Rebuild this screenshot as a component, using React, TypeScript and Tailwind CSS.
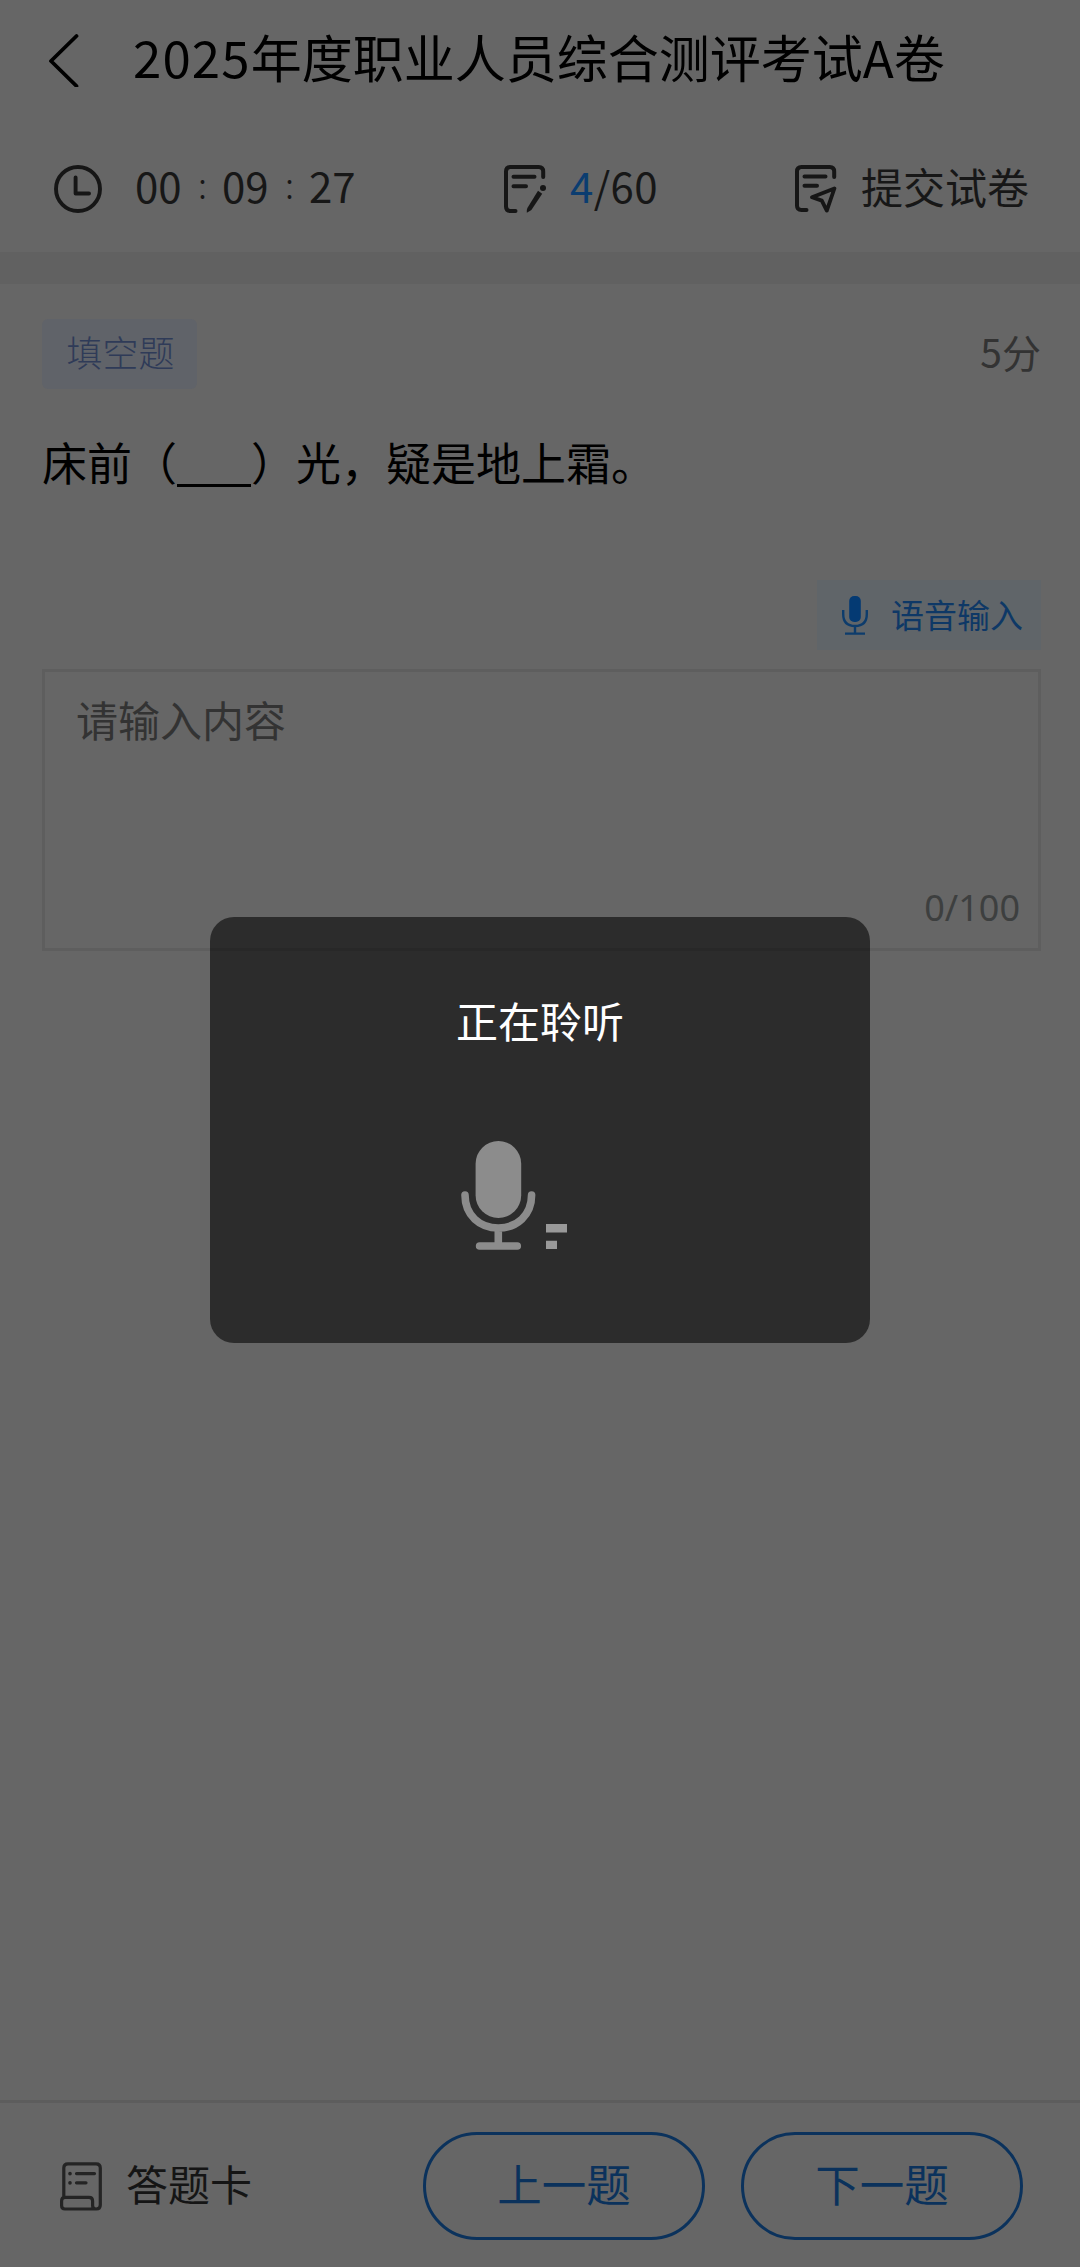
import type { ReactNode } from "react";

function ClockIcon() {
  return (
    <svg width="48" height="48" viewBox="0 0 48 48" fill="none" stroke="#161616" strokeWidth="3.9" strokeLinecap="round" strokeLinejoin="round">
      <circle cx="24" cy="24" r="22" />
      <path d="M21.6 12.5V28.5H35" />
    </svg>
  );
}

function EditSheetIcon() {
  return (
    <svg width="42" height="48" viewBox="0 0 42 48" fill="none" stroke="#161616" strokeWidth="4" strokeLinecap="round" strokeLinejoin="round">
      <path d="M39.2 12V6.5Q39.2 2 34.7 2H6.5Q2 2 2 6.5V41.5Q2 46 6.5 46H11.5" />
      <path d="M9.5 11.8H30.5M9.5 21.2H22" />
      <path d="M34 25.8L38.2 28.8L27.4 45L22.8 47.8Q22.3 45.4 23.4 43Z" fill="#161616" stroke="none" />
      <circle cx="39" cy="23" r="3" fill="#161616" stroke="none" />
    </svg>
  );
}

function SubmitSheetIcon() {
  return (
    <svg width="42" height="48" viewBox="0 0 42 48" fill="none" stroke="#161616" strokeWidth="4" strokeLinecap="round" strokeLinejoin="round">
      <path d="M39.2 12V6.5Q39.2 2 34.7 2H6.5Q2 2 2 6.5V40.5Q2 45 6.5 45H11.5" />
      <path d="M9.5 11.4H30.5M9.5 20.8H22" />
      <path d="M39.4 23.5L17 32.2L26.8 35.6L31.8 45.6Z" strokeWidth="3.8" />
    </svg>
  );
}

function AnswerCardIcon() {
  return (
    <svg width="42" height="49" viewBox="0 0 42 49" fill="none" stroke="#242424" strokeWidth="3.2" strokeLinecap="round" strokeLinejoin="round">
      <path d="M3.8 35V6Q3.8 1.8 8 1.8H36Q40.3 1.8 40.3 6V43Q40.3 47 36.3 47H5Q1.6 47 1.6 43.5V39Q1.6 35.4 5 35.4H29Q32.6 35.4 32.6 39V43.5Q32.6 47 36 47" />
      <path d="M16.5 11.6H34.5M16.5 20.8H26" />
      <path d="M10 11.6V11.7M10 20.8V20.9" strokeWidth="3.6" />
    </svg>
  );
}

function MicIcon() {
  return (
    <svg width="26" height="39" viewBox="0 0 26 39" fill="none" stroke="#0d3c6c" strokeWidth="2.4">
      <rect x="7.2" y="0" width="11.6" height="26" rx="5" fill="#043a73" stroke="none" />
      <path d="M1.2 14V18Q1.2 30 13 30Q24.8 30 24.8 18V14M13 30V37.5M3 37.6H23" />
    </svg>
  );
}

function ListeningIcon() {
  return (
    <svg width="106" height="110" viewBox="0 0 106 110" fill="none" stroke="#8c8c8c" strokeWidth="7.6" strokeLinecap="round">
      <rect x="14.6" y="0" width="45.6" height="77" rx="22.8" fill="#8c8c8c" stroke="none" />
      <path d="M4 54C4 74.5 19 87 37.3 87S70.6 74.5 70.6 54M37.3 87V104M18.6 105H56.3" />
      <path d="M85 83H106V91.4H85ZM85 99.8H96V108H85Z" fill="#999999" stroke="none" />
    </svg>
  );
}

function Header() {
  return (
    <header className="flex h-[120px] items-center pl-[48px]">
      <svg width="32" height="54" viewBox="0 0 32 54" fill="none" stroke="#000" strokeWidth="3.8" strokeLinecap="round" strokeLinejoin="round">
        <path d="M28.5 3L3 28L28.5 53" />
      </svg>
      <h1 className="-mt-[8px] ml-[53px] flex text-[51px] leading-[60px] text-black">
        <span className="tracking-[1.1px]">2025</span>
        <span>年度职业人员综合测评考试A卷</span>
      </h1>
    </header>
  );
}

function TimerColon() {
  return <span className="-mt-[2px] w-[39px] text-center text-[36px] font-light">:</span>;
}

function StatusBar() {
  return (
    <div className="flex h-[132px] items-start pt-[45px] pl-[54px] text-[42px] leading-[48px] text-[#171717]">
      <ClockIcon />
      <div className="-mt-[4px] ml-[33px] flex">
        <span className="w-[48px]">00</span>
        <TimerColon />
        <span className="w-[48px]">09</span>
        <TimerColon />
        <span className="w-[48px]">27</span>
      </div>
      <div className="ml-[147px] flex">
        <EditSheetIcon />
        <span className="-mt-[4px] ml-[24px] w-[225px] tracking-[0.4px]">
          <span className="text-[#0b3d70]">4</span>/60
        </span>
      </div>
      <SubmitSheetIcon />
      <span className="-mt-[3px] ml-[24px]">提交试卷</span>
    </div>
  );
}

function NavButton({ children }: { children: ReactNode }) {
  return (
    <button className="flex h-[108px] w-[282px] items-center justify-center rounded-full border-3 border-[#0b325c] pb-[7px] text-[44.5px] leading-[60px] text-[#0b325c]">
      {children}
    </button>
  );
}

export default function App() {
  return (
    <div className="relative flex h-[2267px] w-[1080px] flex-col overflow-hidden bg-[#666666] font-['Noto_Sans_CJK_SC',sans-serif]">
      <Header />
      <StatusBar />
      <div className="h-[32px] bg-[#616161]" />

      <main className="flex flex-1 flex-col pt-[35px] pr-[39px] pl-[42px]">
        <div className="flex h-[70px] items-center justify-between">
          <span className="flex h-[70px] w-[155px] items-center justify-center rounded-[6px] bg-[#606369] pb-[6px] pl-[2px] text-[36px] font-light text-[#2f3b58]">
            填空题
          </span>
          <span className="pb-[6px] text-[39px] text-[#333333]">5分</span>
        </div>

        <p className="mt-[43px] text-[45px] leading-[60px] whitespace-nowrap text-black">
          床前（<span className="inline-block h-[38px] w-[74px] border-b-3 border-black align-[-6px]" />）光，疑是地上霜。
        </p>

        <button className="mt-[88px] flex h-[70px] w-[224px] items-center self-end bg-[#606569] pl-[25px] text-[33px] leading-[40px] text-[#0e3866]">
          <MicIcon />
          <span className="-mt-[3px] ml-[23px]">语音输入</span>
        </button>

        <div className="mt-[19px] flex h-[282px] flex-col justify-between border-3 border-[#5e5e5e] px-[31px] pt-[17px]">
          <span className="text-[42px] leading-[60px] text-[#333333]">请输入内容</span>
          <span className="-mr-[13px] mb-[15px] self-end font-['Noto_Sans',sans-serif] text-[36px] leading-[50px] text-[#3d3f3f]">0/100</span>
        </div>
      </main>

      <footer className="flex h-[167px] items-center border-t-3 border-[#5d5d5d] pt-[2px] pl-[60px]">
        <AnswerCardIcon />
        <span className="-mt-[7px] ml-[24px] w-[297px] text-[42px] leading-[60px] text-[#151515]">答题卡</span>
        <div className="flex gap-[36px]">
          <NavButton>上一题</NavButton>
          <NavButton>下一题</NavButton>
        </div>
      </footer>

      <div role="dialog" className="absolute top-[917px] left-[210px] flex h-[426px] w-[660px] flex-col rounded-[24px] bg-black/57 pt-[73px]">
        <span className="text-center text-[42px] leading-[60px] text-white">正在聆听</span>
        <div className="mt-[91px] ml-[251px]">
          <ListeningIcon />
        </div>
      </div>
    </div>
  );
}
